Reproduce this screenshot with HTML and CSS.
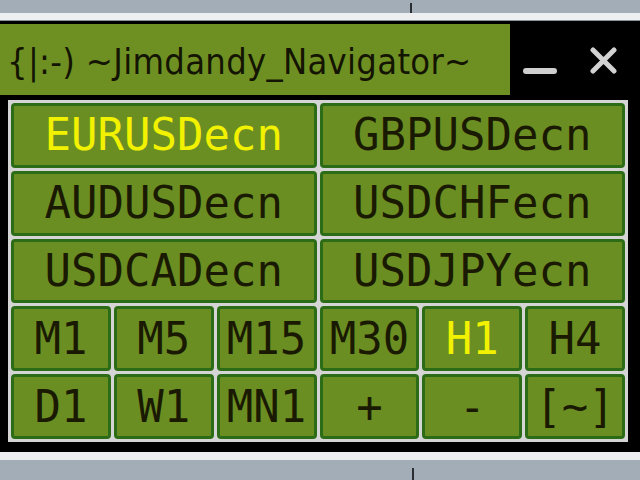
FILE: index.html
```html
<!DOCTYPE html>
<html lang="en">
<head>
    <meta charset="UTF-8">
    <meta name="viewport" content="width=device-width, initial-scale=1.0">
    <title>Jimdandy Navigator</title>
    <link rel="stylesheet" href="styles.css">
</head>
<body>
    <div class="chart-top"><span class="tick"></span></div>
    <div class="strip strip-top"></div>

    <div class="panel">
        <div class="titlebar">
            <div class="title">{|:-) ~Jimdandy_Navigator~</div>
            <div class="controls">
                <span class="min"></span>
                <svg class="close" viewBox="0 0 27 27" width="27" height="27">
                    <path d="M3 3 L24 24 M24 3 L3 24" stroke="#d2d2d2" stroke-width="5" stroke-linecap="round"/>
                </svg>
            </div>
        </div>

        <div class="grid">
            <button class="btn wide active">EURUSDecn</button>
            <button class="btn wide">GBPUSDecn</button>
            <button class="btn wide">AUDUSDecn</button>
            <button class="btn wide">USDCHFecn</button>
            <button class="btn wide">USDCADecn</button>
            <button class="btn wide">USDJPYecn</button>

            <button class="btn">M1</button>
            <button class="btn">M5</button>
            <button class="btn">M15</button>
            <button class="btn">M30</button>
            <button class="btn active">H1</button>
            <button class="btn">H4</button>

            <button class="btn">D1</button>
            <button class="btn">W1</button>
            <button class="btn">MN1</button>
            <button class="btn">+</button>
            <button class="btn">-</button>
            <button class="btn">[~]</button>
        </div>
    </div>

    <div class="strip strip-bottom"></div>
    <div class="chart-bottom"><span class="tick"></span></div>
</body>
</html>
```

FILE: styles.css
```css
body {
    margin: 0;
    background-color: #a3adb7;
    width: 640px;
    height: 480px;
    overflow: hidden;
}

.chart-top {
    height: 13px;
    padding-top: 3px;
    box-sizing: border-box;
}

.chart-bottom {
    height: 20px;
    padding-top: 8px;
    box-sizing: border-box;
}

.tick {
    display: block;
    width: 2px;
    height: 10px;
    margin-left: 410px;
    background-color: #2a2e33;
}

.chart-bottom .tick {
    margin-left: 412px;
    height: 12px;
}

.strip {
    background-color: #eceef0;
}

.strip-top {
    height: 7px;
    border-bottom: 1px solid #8c949c;
}

.strip-bottom {
    height: 8px;
}

.panel {
    background-color: #000;
    padding: 3px 0 10px 0;
}

.titlebar {
    display: flex;
    height: 71px;
}

.title {
    width: 510px;
    background-color: #6e9023;
    color: #141402;
    font-family: "DejaVu Sans Condensed", "DejaVu Sans", sans-serif;
    font-size: 36px;
    letter-spacing: 0.3px;
    line-height: 75px;
    padding-left: 7px;
    box-sizing: border-box;
    white-space: nowrap;
    overflow: hidden;
}

.controls {
    display: flex;
    align-items: flex-start;
}

.min {
    display: block;
    width: 34px;
    height: 6px;
    margin: 44px 0 0 13px;
    border-radius: 3px;
    background-color: #cfcfcf;
}

.close {
    display: block;
    margin: 23px 0 0 33px;
}

.grid {
    display: grid;
    grid-template-columns: repeat(6, 1fr);
    grid-template-rows: repeat(5, 1fr);
    gap: 3px;
    padding: 3px;
    margin: 5px 0 0 8px;
    width: 620px;
    height: 342px;
    box-sizing: border-box;
    background-color: #d5d5d5;
}

.btn {
    background-color: #6b8e23;
    border: 3px solid #2d6c17;
    border-radius: 4px;
    color: #1a1a02;
    font-family: "DejaVu Sans Mono", "Liberation Mono", monospace;
    font-size: 44px;
    line-height: 1;
    padding: 0;
    margin: 0;
    cursor: pointer;
}

.btn.wide {
    grid-column: span 3;
}

.btn.active {
    color: #f2f200;
}
```
